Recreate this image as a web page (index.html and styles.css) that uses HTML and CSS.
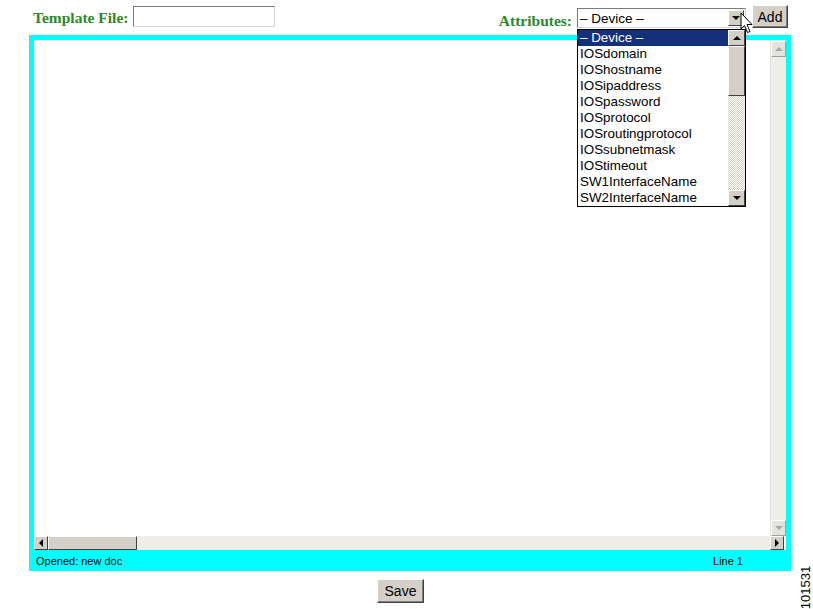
FILE: index.html
```html
<!DOCTYPE html>
<html lang="en">

<head>
    <meta charset="UTF-8">
    <meta name="viewport" content="width=device-width, initial-scale=1.0">
    <title>Template Editor</title>
    <link rel="stylesheet" href="styles.css">
</head>

<body>
    <!-- Baris atas: file template dan atribut -->
    <div class="toolbar">
        <div class="file-group">
            <span class="label">Template File:</span>
            <div class="text-input"></div>
        </div>

        <div class="attr-group">
            <span class="label">Attributes:</span>
            <div class="select">
                <span class="select-text">&ndash; Device &ndash;</span>
                <span class="arrow-btn"><span class="tri-down"></span></span>
            </div>
            <div class="btn btn-add">Add</div>
        </div>
    </div>

    <!-- Daftar pilihan yang sedang terbuka -->
    <div class="dropdown">
        <div class="dropdown-items">
            <div class="item selected">&ndash; Device &ndash;</div>
            <div class="item">IOSdomain</div>
            <div class="item">IOShostname</div>
            <div class="item">IOSipaddress</div>
            <div class="item">IOSpassword</div>
            <div class="item">IOSprotocol</div>
            <div class="item">IOSroutingprotocol</div>
            <div class="item">IOSsubnetmask</div>
            <div class="item">IOStimeout</div>
            <div class="item">SW1InterfaceName</div>
            <div class="item">SW2InterfaceName</div>
        </div>
        <div class="list-scroll">
            <span class="arrow-btn sq"><span class="tri-up"></span></span>
            <span class="list-thumb"></span>
            <span class="list-track"></span>
            <span class="arrow-btn sq"><span class="tri-down"></span></span>
        </div>
    </div>

    <!-- Kursor mouse -->
    <svg class="cursor" width="14" height="22" viewBox="0 0 14 22">
        <path d="M1 1 L1 17 L4.5 13.5 L7.5 20.5 L10 19.5 L7 12.5 L12 12.5 Z" fill="#fff" stroke="#000" stroke-width="1"/>
    </svg>

    <!-- Area editor -->
    <div class="editor">
        <div class="edit-area">
            <div class="text-space"></div>
            <div class="vscroll">
                <span class="sbtn light"><span class="tri-up gray"></span></span>
                <span class="vtrack"></span>
                <span class="sbtn light"><span class="tri-down gray"></span></span>
            </div>
            <div class="hscroll">
                <span class="sbtn hbtn"><span class="tri-left"></span></span>
                <span class="hthumb"></span>
                <span class="htrack"></span>
            </div>
            <span class="sbtn hbtn"><span class="tri-right"></span></span>
        </div>
        <div class="status">
            <span>Opened: new doc</span>
            <span>Line 1</span>
        </div>
    </div>

    <div class="footer">
        <div class="btn btn-save">Save</div>
    </div>

    <div class="fig-num">101531</div>
</body>

</html>
```

FILE: styles.css
```css
body {
    margin: 0;
    width: 813px;
    height: 609px;
    position: relative;
    overflow: hidden;
    background-color: #fff;
    font-family: "Liberation Serif", serif;
}

/* Baris atas */

.toolbar {
    display: flex;
    align-items: flex-start;
    height: 35px;
}

.file-group {
    display: flex;
    align-items: center;
    margin-left: 33px;
    margin-top: 6px;
}

.label {
    color: #2a8a2a;
    font-weight: bold;
    font-size: 15.5px;
}

.file-group .label {
    padding-top: 3px;
}

.text-input {
    width: 140px;
    height: 19px;
    margin-left: 5px;
    border: 1px solid;
    border-color: #7b7b7b #d6d6d6 #d6d6d6 #7b7b7b;
    background-color: #fff;
}

.attr-group {
    display: flex;
    align-items: flex-start;
    margin-left: auto;
    margin-right: 25px;
    margin-top: 5px;
}

.attr-group .label {
    margin-top: 7px;
    margin-right: 5px;
}

.select {
    display: flex;
    align-items: center;
    justify-content: space-between;
    width: 167px;
    height: 18px;
    margin-top: 3px;
    border: 1px solid;
    border-color: #7b7b7b #d6d6d6 #d6d6d6 #7b7b7b;
    font-family: "Liberation Sans", sans-serif;
    font-size: 13.5px;
    color: #000;
}

.select-text {
    padding-left: 2px;
}

.arrow-btn {
    display: flex;
    align-items: center;
    justify-content: center;
    width: 14px;
    height: 14px;
    margin-right: 1px;
    background-color: #d4d0c8;
    border: 1px solid;
    border-color: #fff #404040 #404040 #fff;
}

.arrow-btn.sq {
    margin: 0;
    width: 15px;
    height: 14px;
}

.tri-down,
.tri-up,
.tri-left,
.tri-right {
    width: 0;
    height: 0;
    border: 4px solid transparent;
}

.tri-down {
    border-top: 4px solid #000;
    border-bottom-width: 0;
}

.tri-up {
    border-bottom: 4px solid #000;
    border-top-width: 0;
}

.tri-left {
    border-right: 4px solid #000;
    border-left-width: 0;
}

.tri-right {
    border-left: 4px solid #000;
    border-right-width: 0;
}

.tri-up.gray {
    border-bottom-color: #a8a8a8;
}

.tri-down.gray {
    border-top-color: #a8a8a8;
}

.btn {
    background-color: #d4d0c8;
    border: 1px solid;
    border-color: #fff #404040 #404040 #fff;
    box-shadow: inset -1px -1px 0 #808080;
    font-family: "Liberation Sans", sans-serif;
    font-size: 14px;
    color: #000;
    display: flex;
    align-items: center;
    justify-content: center;
    box-sizing: border-box;
}

.btn-add {
    width: 36px;
    height: 23px;
    margin-left: 6px;
    margin-top: 0;
}

/* Daftar dropdown terbuka */

.dropdown {
    position: absolute;
    left: 577px;
    top: 29px;
    width: 167px;
    height: 176px;
    display: flex;
    border: 1px solid #000;
    background-color: #fff;
    font-family: "Liberation Sans", sans-serif;
    font-size: 13.4px;
    z-index: 5;
}

.dropdown-items {
    flex: 1;
}

.item {
    height: 16px;
    line-height: 16px;
    padding-left: 2px;
    color: #000;
    white-space: nowrap;
}

.item.selected {
    background-color: #15307a;
    color: #fff;
}

.list-scroll {
    width: 17px;
    display: flex;
    flex-direction: column;
}

.list-thumb {
    height: 48px;
    background-color: #d4d0c8;
    border: 1px solid;
    border-color: #fff #404040 #404040 #fff;
}

.list-track {
    flex: 1;
    background: repeating-conic-gradient(#d4d0c8 0 25%, #fff 0 50%) 0 0 / 2px 2px;
}

/* Kursor */

.cursor {
    position: absolute;
    left: 740px;
    top: 12px;
    z-index: 6;
}

/* Editor dengan bingkai cyan */

.editor {
    width: 752px;
    margin-left: 29px;
    border: 5px solid #00ffff;
    border-bottom: 0;
}

.edit-area {
    display: grid;
    grid-template-columns: 1fr 16px;
    grid-template-rows: 496px 14px;
    background-color: #fff;
}

.vscroll {
    display: flex;
    flex-direction: column;
    background-color: #eeede8;
    border-left: 1px solid #e0e0e0;
    padding-top: 1px;
}

.sbtn {
    display: flex;
    align-items: center;
    justify-content: center;
    height: 14px;
    background-color: #e4e2dc;
    border: 1px solid;
    border-color: #fff #a0a0a0 #a0a0a0 #fff;
}

.vtrack {
    flex: 1;
}

.hscroll {
    display: flex;
    background-color: #eeede8;
}

.hbtn {
    width: 12px;
    height: 12px;
    background-color: #d4d0c8;
    border-color: #fff #404040 #404040 #fff;
}

.hthumb {
    width: 87px;
    background-color: #d4d0c8;
    border: 1px solid;
    border-color: #fff #404040 #404040 #fff;
}

.htrack {
    flex: 1;
}

.status {
    display: flex;
    justify-content: space-between;
    height: 21px;
    line-height: 22px;
    background-color: #00ffff;
    font-family: "Liberation Sans", sans-serif;
    font-size: 11px;
    color: #000;
    padding-left: 2px;
    padding-right: 43px;
}

/* Tombol simpan */

.footer {
    display: flex;
    justify-content: center;
    padding-right: 12px;
    margin-top: 8px;
}

.btn-save {
    width: 47px;
    height: 24px;
}

.fig-num {
    position: absolute;
    left: 784px;
    top: 580px;
    transform: rotate(-90deg);
    font-family: "Liberation Sans", sans-serif;
    font-size: 13px;
    color: #000;
}
```
